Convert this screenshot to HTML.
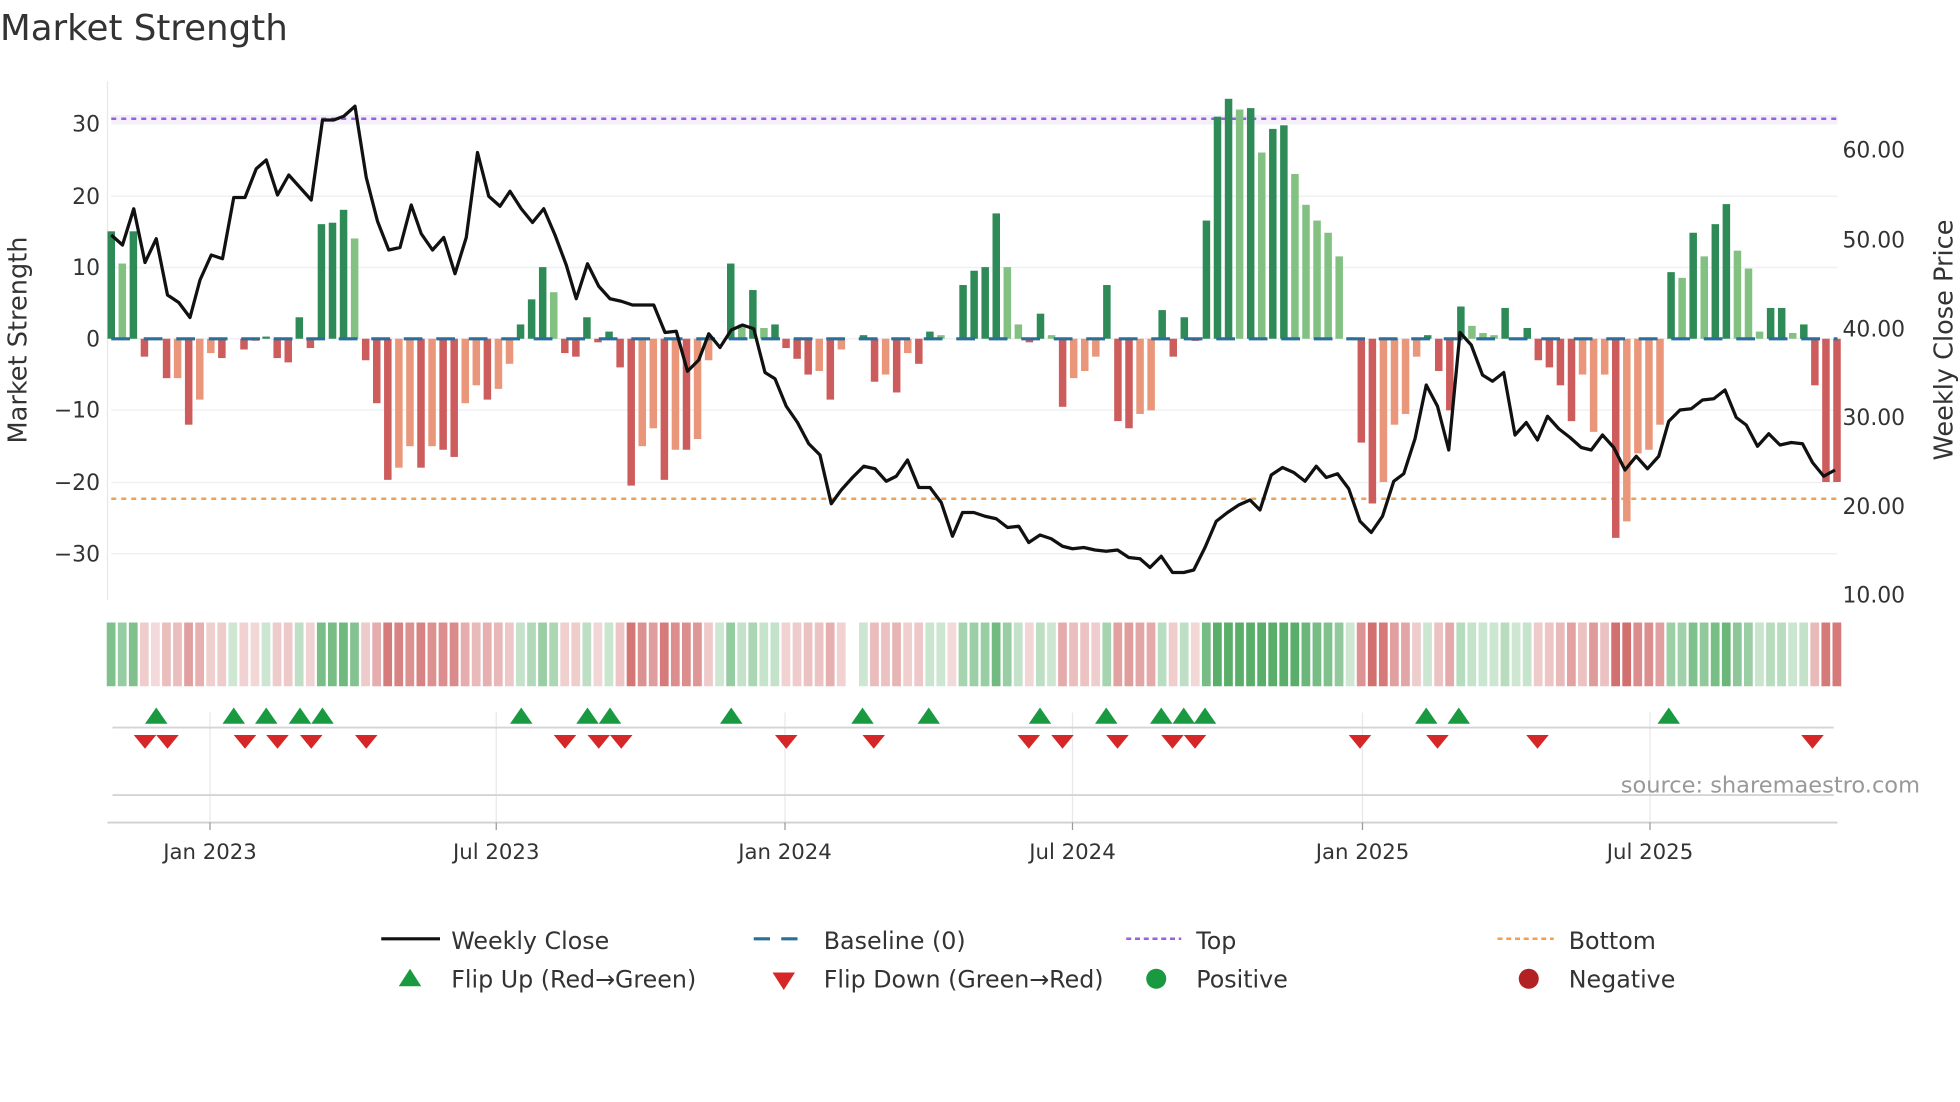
<!DOCTYPE html>
<html><head><meta charset="utf-8"><style>
html,body{margin:0;padding:0;background:#fff;width:1960px;height:1102px;overflow:hidden}
svg{display:block;font-family:"DejaVu Sans","Liberation Sans",sans-serif}
</style></head><body>
<svg id="s" width="1960" height="1102" viewBox="0 0 1568 881.6" xmlns="http://www.w3.org/2000/svg">
<text x="0" y="32" font-size="28.5" fill="#333">Market Strength</text>
<g id="grid"></g>
<line x1="86" y1="65" x2="86" y2="480" stroke="#e6e8ee" stroke-width="1"/>
<rect x="89" y="92" width="1381" height="7" fill="#f3effb"/>
<line x1="89" y1="95" x2="1470" y2="95" stroke="#9b5fe0" stroke-width="2" stroke-dasharray="4 4"/>
<line x1="89" y1="399" x2="1470" y2="399" stroke="#f0a050" stroke-width="2" stroke-dasharray="4 4"/>
<g id="bars"></g>
<line x1="89" y1="271" x2="1470" y2="271" stroke="#2a6f9b" stroke-width="2.5" stroke-dasharray="15 11"/>
<polyline id="price" fill="none" stroke="#111" stroke-width="2.6" stroke-linejoin="round"/>
<g font-size="17.5" fill="#333" text-anchor="end">
<text x="80" y="105">30</text><text x="80" y="163">20</text><text x="80" y="220">10</text><text x="80" y="277">0</text>
<text x="80" y="334">−10</text><text x="80" y="392">−20</text><text x="80" y="449">−30</text>
</g>
<g font-size="17.5" fill="#333">
<text x="1474" y="126">60.00</text><text x="1474" y="198">50.00</text><text x="1474" y="269">40.00</text>
<text x="1474" y="340">30.00</text><text x="1474" y="411">20.00</text><text x="1474" y="482">10.00</text>
</g>
<text transform="translate(21,272) rotate(-90)" font-size="20.5" fill="#333" text-anchor="middle">Market Strength</text>
<text transform="translate(1562,272) rotate(-90)" font-size="20.5" fill="#333" text-anchor="middle">Weekly Close Price</text>
<g id="strip"></g>
<g stroke="#e8e8ec" stroke-width="1">
<line x1="168" y1="570" x2="168" y2="658"/><line x1="397" y1="570" x2="397" y2="658"/><line x1="628" y1="570" x2="628" y2="658"/>
<line x1="858" y1="570" x2="858" y2="658"/><line x1="1090" y1="570" x2="1090" y2="658"/><line x1="1320" y1="570" x2="1320" y2="658"/>
</g>
<line x1="90" y1="582" x2="1467" y2="582" stroke="#d4d4d8" stroke-width="1.5"/>
<line x1="90" y1="636" x2="1467" y2="636" stroke="#d4d4d8" stroke-width="1.5"/>
<line x1="86" y1="658" x2="1470" y2="658" stroke="#d0d0d4" stroke-width="1.5"/>
<g stroke="#999" stroke-width="1">
<line x1="168" y1="658" x2="168" y2="664"/><line x1="397" y1="658" x2="397" y2="664"/><line x1="628" y1="658" x2="628" y2="664"/>
<line x1="858" y1="658" x2="858" y2="664"/><line x1="1090" y1="658" x2="1090" y2="664"/><line x1="1320" y1="658" x2="1320" y2="664"/>
</g>
<g id="marks"></g>
<g font-size="17" fill="#333" text-anchor="middle">
<text x="168" y="687">Jan 2023</text><text x="397" y="687">Jul 2023</text><text x="628" y="687">Jan 2024</text>
<text x="858" y="687">Jul 2024</text><text x="1090" y="687">Jan 2025</text><text x="1320" y="687">Jul 2025</text>
</g>
<text x="1536" y="634" font-size="18" fill="#999" text-anchor="end">source: sharemaestro.com</text>
<g font-size="19" fill="#333">
<line x1="305" y1="751" x2="352" y2="751" stroke="#111" stroke-width="2.5"/><text x="361" y="759">Weekly Close</text>
<line x1="603" y1="751" x2="647" y2="751" stroke="#2a6f9b" stroke-width="2.5" stroke-dasharray="13 9"/><text x="659" y="759">Baseline (0)</text>
<line x1="901" y1="751" x2="945" y2="751" stroke="#9b5fe0" stroke-width="2" stroke-dasharray="4 3"/><text x="957" y="759">Top</text>
<line x1="1198" y1="751" x2="1243" y2="751" stroke="#f0a050" stroke-width="2" stroke-dasharray="4 3"/><text x="1255" y="759">Bottom</text>
<polygon points="319,789 337,789 328,775" fill="#1a9a40"/><text x="361" y="790">Flip Up (Red→Green)</text>
<polygon points="618,778 636,778 627,792" fill="#d62728"/><text x="659" y="790">Flip Down (Green→Red)</text>
<circle cx="925" cy="783" r="8" fill="#1a9a40"/><text x="957" y="790">Positive</text>
<circle cx="1223" cy="783" r="8" fill="#b22222"/><text x="1255" y="790">Negative</text>
</g>
</svg>
<script>
var NS="http://www.w3.org/2000/svg";
function el(p,t,a){var e=document.createElementNS(NS,t);for(var k in a)e.setAttribute(k,a[k]);document.getElementById(p).appendChild(e);return e;}
[99,157,214,271,328,386,443].forEach(function(y){el("grid","line",{x1:89,x2:1470,y1:y,y2:y,stroke:"#eef0f4","stroke-width":1.2});});
var B=[[15,'d'],[10.5,'l'],[15,'d'],[-2.5,'r'],[0,''],[-5.5,'r'],[-5.5,'s'],[-12,'r'],[-8.5,'s'],[-2,'s'],[-2.7,'r'],[0,''],[-1.5,'r'],[-0.3,'s'],[0.3,'d'],[-2.7,'r'],[-3.3,'r'],[3,'d'],[-1.3,'r'],[16,'d'],[16.2,'d'],[18,'d'],[14,'l'],[-3,'r'],[-9,'r'],[-19.7,'r'],[-18,'s'],[-15,'s'],[-18,'r'],[-15,'s'],[-15.5,'r'],[-16.5,'r'],[-9,'s'],[-6.5,'s'],[-8.5,'r'],[-7,'s'],[-3.5,'s'],[2,'d'],[5.5,'d'],[10,'d'],[6.5,'l'],[-2,'r'],[-2.5,'r'],[3,'d'],[-0.5,'r'],[1,'d'],[-4,'r'],[-20.5,'r'],[-15,'s'],[-12.5,'s'],[-19.7,'r'],[-15.5,'s'],[-15.5,'r'],[-14,'s'],[-3,'s'],[0,''],[10.5,'d'],[2,'l'],[6.8,'d'],[1.5,'l'],[2,'d'],[-1.3,'r'],[-2.8,'r'],[-5,'r'],[-4.5,'s'],[-8.5,'r'],[-1.5,'s'],[0,''],[0.5,'d'],[-6,'r'],[-5,'s'],[-7.5,'r'],[-2,'s'],[-3.5,'r'],[1,'d'],[0.5,'l'],[0,''],[7.5,'d'],[9.5,'d'],[10,'d'],[17.5,'d'],[10,'l'],[2,'l'],[-0.5,'r'],[3.5,'d'],[0.5,'l'],[-9.5,'r'],[-5.5,'s'],[-4.5,'s'],[-2.5,'s'],[7.5,'d'],[-11.5,'r'],[-12.5,'r'],[-10.5,'s'],[-10,'s'],[4,'d'],[-2.5,'r'],[3,'d'],[-0.3,'r'],[16.5,'d'],[31,'d'],[33.5,'d'],[32,'l'],[32.2,'d'],[26,'l'],[29.3,'d'],[29.8,'d'],[23,'l'],[18.7,'l'],[16.5,'l'],[14.8,'l'],[11.5,'l'],[0.2,'l'],[-14.5,'r'],[-23,'r'],[-20,'s'],[-12,'s'],[-10.5,'s'],[-2.5,'s'],[0.5,'d'],[-4.5,'r'],[-10,'r'],[4.5,'d'],[1.8,'l'],[0.8,'l'],[0.5,'l'],[4.3,'d'],[0,''],[1.5,'d'],[-3,'r'],[-4,'r'],[-6.5,'r'],[-11.5,'r'],[-5,'s'],[-13,'s'],[-5,'s'],[-27.8,'r'],[-25.5,'s'],[-16,'s'],[-15.5,'s'],[-12,'s'],[9.3,'d'],[8.5,'l'],[14.8,'d'],[11.5,'l'],[16,'d'],[18.8,'d'],[12.3,'l'],[9.8,'l'],[1,'l'],[4.3,'d'],[4.3,'d'],[0.8,'l'],[2,'d'],[-6.5,'r'],[-20,'r'],[-20,'r']];
var C={d:'#2e8b57',l:'#82c182',r:'#cd5c5c',s:'#e9967a'};
B.forEach(function(b,i){var x=89+8.85*i,v=b[0];
 if(v!==0){var h=Math.abs(v)*5.73;el("bars","rect",{x:x-3,y:v>0?271-h:271,width:6,height:h,fill:C[b[1]]});}
 if(i===67)return;
 var a=Math.min(Math.abs(v)/22,1);var col;
 if(v>=0.1||(v===0&&i%2)){col="rgba(60,160,80,"+(0.25+0.6*a)+")";}else{col="rgba(200,80,80,"+(0.22+0.6*a)+")";}
 el("strip","rect",{x:x-3.6,y:498,width:7,height:51,fill:col});
});
var P=[[89,188],[98,196],[107,167],[116,210],[125,191],[134,236],[143,242],[152,254],[160,224],[169,204],[178,207],[187,158],[196,158],[205,135],[213,128],[222,156],[231,140],[240,150],[249,160],[258,96],[267,96],[275,93],[284,85],[293,142],[302,177],[311,200],[320,198],[329,164],[337,187],[346,200],[355,190],[364,219],[373,190],[382,122],[391,157],[400,165],[408,153],[417,167],[426,178],[435,167],[444,188],[453,212],[461,239],[470,211],[479,229],[488,239],[497,241],[506,244],[514,244],[523,244],[532,266],[541,265],[550,297],[559,288],[567,267],[576,278],[585,264],[594,260],[603,263],[612,298],[620,303],[629,325],[638,338],[647,355],[656,364],[665,403],[673,392],[682,382],[691,373],[700,375],[709,385],[717,381],[726,368],[735,390],[744,390],[753,402],[762,429],[770,410],[779,410],[788,413],[797,415],[806,422],[815,421],[823,434],[832,428],[841,431],[850,437],[858,439],[867,438],[876,440],[885,441],[894,440],[903,446],[912,447],[920,454],[929,445],[938,458],[947,458],[955,456],[964,438],[973,417],[982,410],[991,404],[1000,400],[1008,408],[1017,380],[1026,374],[1035,378],[1044,385],[1053,373],[1061,382],[1070,379],[1079,391],[1088,417],[1097,426],[1106,413],[1115,385],[1123,379],[1132,351],[1141,308],[1150,325],[1159,360],[1168,266],[1177,276],[1186,300],[1194,305],[1203,298],[1212,348],[1221,338],[1230,352],[1238,333],[1247,343],[1256,350],[1265,358],[1273,360],[1282,348],[1291,358],[1300,376],[1309,365],[1318,375],[1327,365],[1335,337],[1344,328],[1353,327],[1362,320],[1371,319],[1380,312],[1389,334],[1397,340],[1406,357],[1415,347],[1424,356],[1433,354],[1442,355],[1450,370],[1459,381],[1468,376]];
document.getElementById("price").setAttribute("points",P.map(function(p){return p.join(",")}).join(" "));
[125,187,213,240,258,417,470,488,585,690,743,832,885,929,947,964,1141,1167,1335].forEach(function(x){el("marks","polygon",{points:(x-9)+",579 "+(x+9)+",579 "+x+",566",fill:"#1a9a40"});});
[116,134,196,222,249,293,452,479,497,629,699,823,850,894,938,956,1088,1150,1230,1450].forEach(function(x){el("marks","polygon",{points:(x-9)+",588 "+(x+9)+",588 "+x+",599",fill:"#d62728"});});
</script>
</body></html>
